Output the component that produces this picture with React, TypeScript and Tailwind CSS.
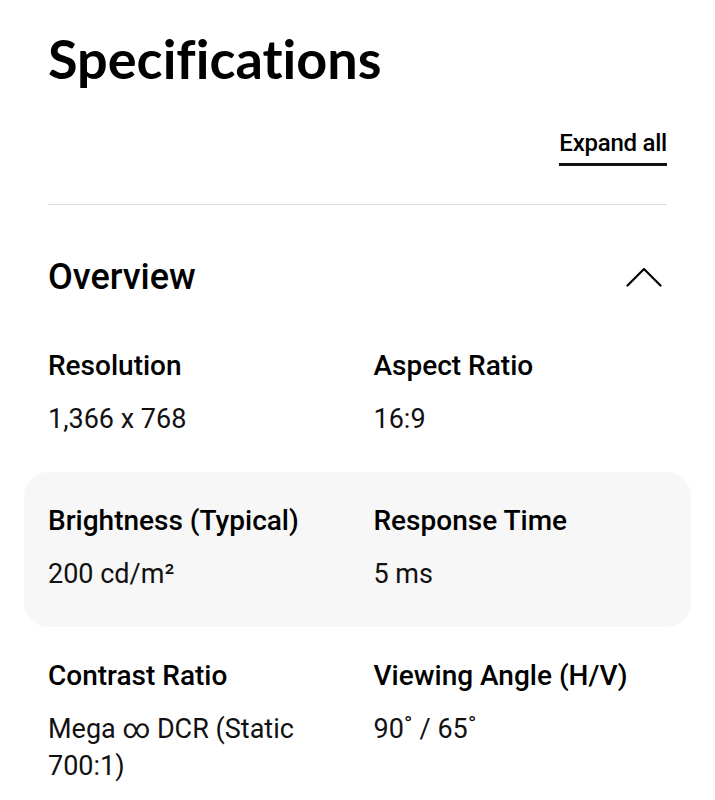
import React from 'react';

type Spec = { label: string; value: string };

const ROWS: Spec[][] = [
  [
    { label: 'Resolution', value: '1,366 x 768' },
    { label: 'Aspect Ratio', value: '16:9' },
  ],
  [
    { label: 'Brightness (Typical)', value: '200 cd/m²' },
    { label: 'Response Time', value: '5 ms' },
  ],
  [
    { label: 'Contrast Ratio', value: 'Mega ∞ DCR (Static 700:1)' },
    { label: 'Viewing Angle (H/V)', value: '90˚ / 65˚' },
  ],
];

const ChevronUp = () => (
  <svg width="36" height="20" viewBox="0 0 36 20" fill="none" aria-hidden="true">
    <polyline points="1.5,18.5 18,2 34.5,18.5" stroke="#000" strokeWidth="2.2" strokeLinecap="round" strokeLinejoin="round" />
  </svg>
);

export default function App() {
  return (
    <div className="w-[715px] min-h-[800px] bg-white px-12 text-black font-['Roboto',_'Liberation_Sans',_sans-serif]">
      <h1 className="pt-[28px] text-[54px] leading-[62px] font-bold [font-variant-ligatures:none] font-['Lato',_'Liberation_Sans',_sans-serif]">
        Specifications
      </h1>

      <div className="flex justify-end mt-[38px]">
        <button className="text-[24px] leading-[30px] font-medium tracking-[-0.01em] pb-[5px] border-b-[3px] border-[#111]">
          Expand all
        </button>
      </div>

      <div className="mt-[38px] h-px bg-[#dddddd]" />

      <div className="flex items-center justify-between pt-[52px] pb-[20px]">
        <h2 className="text-[36px] leading-[40px] font-medium">Overview</h2>
        <span className="mr-[5px]">
          <ChevronUp />
        </span>
      </div>

      <div className="flex flex-col">
        {ROWS.map((row, i) => (
          <div
            key={i}
            className={
              i === 1
                ? '-mx-6 px-6 h-[155px] rounded-[24px] bg-[#f7f7f7] grid grid-cols-2 gap-x-8 pt-[32px]'
                : 'h-[155px] grid grid-cols-2 gap-x-8 pt-[32px]'
            }
          >
            {row.map((spec) => (
              <div key={spec.label} className="flex flex-col">
                <div className="text-[28px] leading-[34px] font-medium">{spec.label}</div>
                <div className="mt-[18px] text-[27px] leading-[37px] font-normal text-[#111]">
                  {spec.value}
                </div>
              </div>
            ))}
          </div>
        ))}
      </div>
    </div>
  );
}
